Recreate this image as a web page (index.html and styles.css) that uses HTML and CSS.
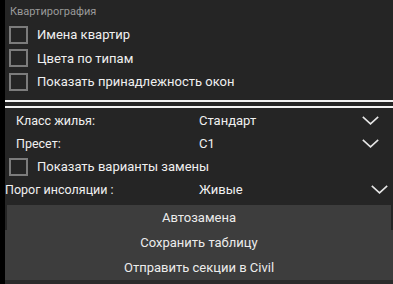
FILE: index.html
```html
<!DOCTYPE html>
<html lang="ru">
<head>
<meta charset="utf-8">
<link rel="stylesheet" href="styles.css">
</head>
<body>
<div class="panel">
  <div class="section-title">Квартирография</div>
  <label class="check-row"><span class="box"></span><span class="check-label">Имена квартир</span></label>
  <label class="check-row"><span class="box"></span><span class="check-label">Цвета по типам</span></label>
  <label class="check-row"><span class="box"></span><span class="check-label">Показать принадлежность окон</span></label>
  <div class="double-line"><div class="line"></div><div class="line"></div></div>
  <div class="select-row indent">
    <span class="sel-label">Класс жилья:</span>
    <span class="sel-value">Стандарт</span>
    <svg class="chev" width="17" height="9" viewBox="0 0 17 9"><path d="M0.8 0.8 L8.5 7.8 L16.2 0.8" fill="none" stroke="#e6e6e6" stroke-width="1.6"/></svg>
  </div>
  <div class="select-row indent">
    <span class="sel-label">Пресет:</span>
    <span class="sel-value">С1</span>
    <svg class="chev" width="17" height="9" viewBox="0 0 17 9"><path d="M0.8 0.8 L8.5 7.8 L16.2 0.8" fill="none" stroke="#e6e6e6" stroke-width="1.6"/></svg>
  </div>
  <label class="check-row"><span class="box"></span><span class="check-label">Показать варианты замены</span></label>
  <div class="select-row flush">
    <span class="sel-label">Порог инсоляции :</span>
    <span class="sel-value">Живые</span>
    <svg class="chev" width="17" height="9" viewBox="0 0 17 9"><path d="M0.8 0.8 L8.5 7.8 L16.2 0.8" fill="none" stroke="#e6e6e6" stroke-width="1.6"/></svg>
  </div>
  <div class="buttons">
    <div class="btn first">Автозамена</div>
    <div class="btn">Сохранить таблицу</div>
    <div class="btn">Отправить секции в Civil</div>
  </div>
</div>
</body>
</html>
```
FILE: styles.css
```css
html, body {
  margin: 0;
  padding: 0;
  background: #000;
}
body {
  width: 393px;
  height: 284px;
  overflow: hidden;
  font-family: Roboto, "Liberation Sans", sans-serif;
  color: #f0f0f0;
}
.panel {
  margin-left: 5px;
  height: 284px;
  background: #252525;
  display: flex;
  flex-direction: column;
}
.section-title {
  height: 23px;
  padding-left: 5px;
  line-height: 23px;
  font-size: 11px;
  color: #9a9a9a;
}
.check-row {
  height: 24px;
  display: flex;
  align-items: center;
  padding-left: 4px;
  font-size: 13px;
}
.box {
  width: 15px;
  height: 14px;
  border: 2px solid #7c7c7c;
  flex: none;
}
.check-label {
  margin-left: 9px;
}
.double-line {
  height: 12px;
  display: flex;
  flex-direction: column;
  justify-content: center;
  gap: 4px;
  padding-top: 4px;
}
.line {
  height: 2px;
  background: #f2f2f2;
}
.select-row {
  height: 23px;
  display: flex;
  align-items: center;
  font-size: 13px;
}
.select-row.indent {
  padding-left: 11px;
  padding-right: 14px;
}
.select-row.flush {
  padding-left: 0;
  padding-right: 5px;
}
.sel-label {
  width: 183px;
  flex: none;
  font-size: 12.5px;
}
.select-row.flush .sel-label {
  width: 194px;
}
.sel-value {
  flex: 1;
}
.chev {
  flex: none;
  display: block;
}
.buttons {
  margin-top: 4px;
  display: flex;
  flex-direction: column;
  border-bottom: 4px solid #2b2b2b;
}
.btn {
  height: 25px;
  line-height: 25px;
  text-align: center;
  background: #3d3d3d;
  font-size: 13px;
  color: #ececec;
}
.btn.first {
  margin: 0 2px;
}
```
